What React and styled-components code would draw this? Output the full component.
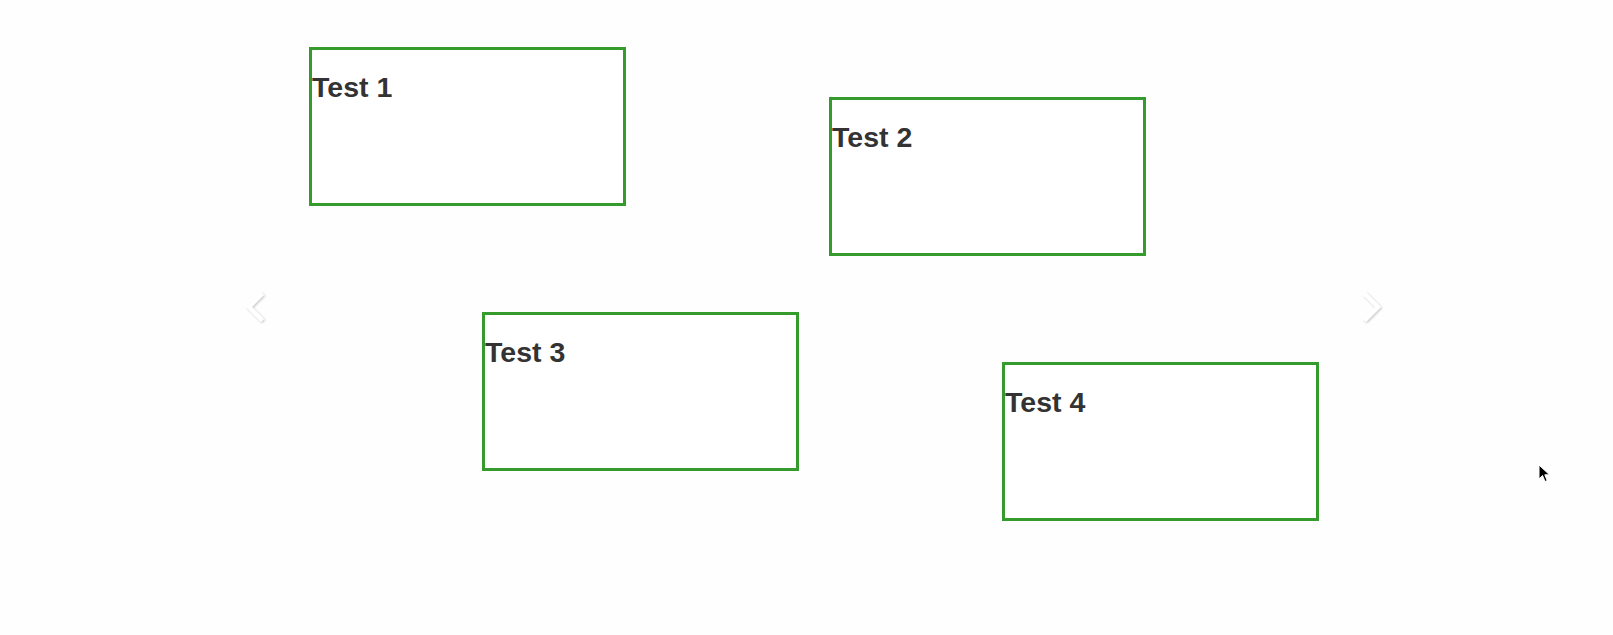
import React from 'react'
import styled, { createGlobalStyle } from 'styled-components'

const GlobalStyle = createGlobalStyle`
  html, body {
    margin: 0;
    padding: 0;
    background: #fefefe;
  }
  body {
    font-family: "Liberation Sans", Arial, sans-serif;
  }
`

const slides = [
  { title: "Test 1" },
  { title: "Test 2" },
  { title: "Test 3" },
  { title: "Test 4" },
]

function Arrow({ dir }) {
  return (
    <ArrowBtn dir={dir} aria-label={dir === "left" ? "Previous" : "Next"}>
      <svg width="26" height="30" viewBox="0 0 26 30">
        {dir === "left"
          ? <polyline points="19,3 7,15 19,27" fill="none" stroke="#ffffff" strokeWidth="4.5" strokeLinecap="square" />
          : <polyline points="7,3 19,15 7,27" fill="none" stroke="#ffffff" strokeWidth="4.5" strokeLinecap="square" />}
      </svg>
    </ArrowBtn>
  )
}

function Cursor() {
  return (
    <CursorMark>
      <svg width="13" height="19" viewBox="0 0 13 19">
        <path d="M1 1 L1 15 L4.5 11.5 L7 17.5 L9.2 16.6 L6.8 10.8 L11.5 10.8 Z" fill="#000" stroke="#fff" strokeWidth="1" />
      </svg>
    </CursorMark>
  )
}

function App() {
  const rows = [slides.slice(0, 2), slides.slice(2, 4)]

  return (
    <>
      <GlobalStyle />
      <Page>
        <Stage>
          <Arrow dir="left" />
          {rows.map((row, i) => (
            <SlideRow key={i} indent={i === 0 ? 309 : 482}>
              {row.map((item, j) => (
                <Card key={item.title} drop={j === 1 ? 50 : 0}>
                  <CardTitle>{item.title}</CardTitle>
                </Card>
              ))}
            </SlideRow>
          ))}
          <Arrow dir="right" />
        </Stage>
        <Cursor />
      </Page>
    </>
  )
}

export default App

const Page = styled.div`
  position: relative;
  width: 100%;
  height: 635px;
  overflow: hidden;
  background: #fefefe;
`

const Stage = styled.div`
  position: relative;
  display: flex;
  flex-direction: column;
  gap: 56px;
  padding-top: 47px;
`

const SlideRow = styled.div`
  display: flex;
  align-items: flex-start;
  gap: 203px;
  padding-left: ${(props) => props.indent}px;
`

const Card = styled.div`
  box-sizing: border-box;
  width: 317px;
  height: 159px;
  margin-top: ${(props) => props.drop}px;
  border: 3px solid #349b2c;
  background: #ffffff;
`

const CardTitle = styled.h3`
  margin: 21px 0 0 0;
  font-family: "Liberation Sans", Arial, sans-serif;
  font-size: 28.5px;
  font-weight: 700;
  color: #333333;
  line-height: 1.15;
`

const ArrowBtn = styled.button`
  position: absolute;
  top: 292px;
  ${({ dir }) => dir === "left" ? "left: 242px;" : "left: 1359px;"}
  padding: 0;
  border: none;
  background: transparent;
  cursor: pointer;
  filter: drop-shadow(1px 1px 1px rgba(0, 0, 0, 0.22));
  svg {
    display: block;
  }
`

const CursorMark = styled.div`
  position: absolute;
  left: 1538px;
  top: 464px;
  pointer-events: none;
  svg {
    display: block;
  }
`
